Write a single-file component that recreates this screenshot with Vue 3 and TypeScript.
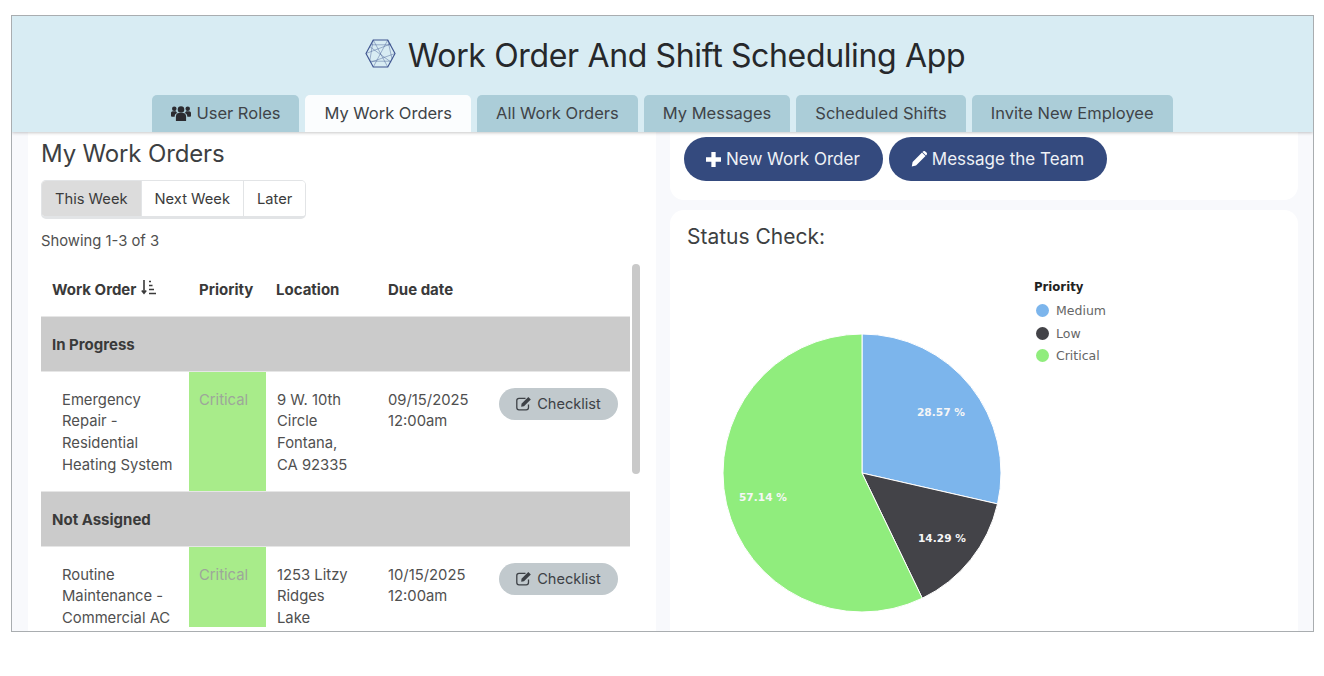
<script setup lang="ts">
import { computed } from 'vue'

const tabs = ['User Roles', 'My Work Orders', 'All Work Orders', 'My Messages', 'Scheduled Shifts', 'Invite New Employee']
const ranges = ['This Week', 'Next Week', 'Later']

const groups = [
  {
    name: 'In Progress',
    rows: [
      {
        title: ['Emergency', 'Repair -', 'Residential', 'Heating System'],
        location: ['9 W. 10th', 'Circle', 'Fontana,', 'CA 92335'],
        due: ['09/15/2025', '12:00am']
      }
    ]
  },
  {
    name: 'Not Assigned',
    rows: [
      {
        title: ['Routine', 'Maintenance -', 'Commercial AC'],
        location: ['1253 Litzy', 'Ridges', 'Lake'],
        due: ['10/15/2025', '12:00am']
      }
    ]
  }
]

const pieData = [
  { name: 'Medium', value: 28.57, color: '#7cb5ec' },
  { name: 'Low', value: 14.29, color: '#434348' },
  { name: 'Critical', value: 57.14, color: '#90ed7d' }
]

const slices = computed(() => {
  const r = 139
  let start = 0
  return pieData.map((d) => {
    const end = start + (d.value / 100) * Math.PI * 2
    const x1 = 140 + r * Math.sin(start)
    const y1 = 140 - r * Math.cos(start)
    const x2 = 140 + r * Math.sin(end)
    const y2 = 140 - r * Math.cos(end)
    const large = end - start > Math.PI ? 1 : 0
    start = end
    return { ...d, path: `M140 140L${x1} ${y1}A${r} ${r} 0 ${large} 1 ${x2} ${y2}Z` }
  })
})
</script>

<template>
  <div class="page">
    <div class="frame">
      <header class="top">
        <h1 class="app-title">
          <svg class="logo" viewBox="0 0 32 30" fill="none" stroke="#3f5590" stroke-width="0.8">
            <path stroke-width="1.2" d="M1 15L8.500 1H23.500L31 15L23.500 29H8.500Z" />
            <path d="M8.500 1L23.500 29M23.500 1L8.500 29M1 15L27 5M5 8L27 24M31 15L6 24M8.500 1L5 22M23.500 1L28 21M6 6H27M5 23H27" stroke-opacity=".55" />
          </svg>
          Work Order And Shift Scheduling App
        </h1>
        <nav class="tabs">
          <div v-for="(t, i) in tabs" :key="t" class="tab" :class="{ active: i === 1 }">
            <svg v-if="i === 0" class="users" viewBox="0 0 22 17" fill="#2b2b30">
              <circle cx="11" cy="4" r="3.600" />
              <circle cx="3.600" cy="3.200" r="2.500" />
              <circle cx="18.400" cy="3.200" r="2.500" />
              <path d="M5.400 16.800V12C5.400 9.200 7 8 8.600 8H13.400C15 8 16.600 9.200 16.600 12V16.800Z" />
              <path d="M0 11V8C0 6.800 1 6 2 6H5.500C5.800 6.900 6.300 7.500 7 8C5 8.600 4 10 4 12H1C.4 12 0 11.600 0 11ZM22 11V8C22 6.800 21 6 20 6H16.500C16.200 6.900 15.700 7.500 15 8C17 8.600 18 10 18 12H21C21.600 12 22 11.600 22 11Z" />
            </svg>
            {{ t }}
          </div>
        </nav>
      </header>

      <main class="content">
        <section class="left">
          <h2 class="section-title">My Work Orders</h2>
          <div class="range-group">
            <button v-for="(r, i) in ranges" :key="r" type="button" class="range" :class="{ on: i === 0 }">{{ r }}</button>
          </div>
          <div class="showing">Showing 1-3 of 3</div>
          <div class="table-wrap">
            <table class="orders">
              <thead>
                <tr>
                  <th class="c-order">
                    Work Order
                    <svg class="sort" viewBox="0 0 15 15" fill="none" stroke="#3a3a3a" stroke-width="1.600">
                      <path d="M3 0V13M.8 10.500L3 13.300L5.200 10.500" />
                      <path d="M8 1.500H10M8 5.500H11.500M8 9.500H13M8 13.500H15" />
                    </svg>
                  </th>
                  <th class="c-priority">Priority</th>
                  <th class="c-location">Location</th>
                  <th class="c-due">Due date</th>
                  <th></th>
                </tr>
              </thead>
              <tbody v-for="g in groups" :key="g.name">
                <tr class="group-row">
                  <td colspan="5">{{ g.name }}</td>
                </tr>
                <tr v-for="row in g.rows" :key="row.title[0]" class="order-row">
                  <td class="c-order title-cell"><div v-for="l in row.title" :key="l">{{ l }}</div></td>
                  <td class="c-priority critical">Critical</td>
                  <td class="c-location"><div v-for="l in row.location" :key="l">{{ l }}</div></td>
                  <td class="c-due"><div v-for="l in row.due" :key="l">{{ l }}</div></td>
                  <td class="c-action">
                    <button type="button" class="checklist">
                      <svg class="edit" viewBox="0 0 16 15" fill="none" stroke="#3d4146" stroke-width="1.300">
                        <path d="M12.500 8.500V11.500C12.500 12.900 11.600 13.800 10.200 13.800H3C1.700 13.800 .8 12.900 .8 11.500V4.500C.8 3.200 1.700 2.300 3 2.300H9.500" />
                        <path fill="#3d4146" stroke="none" d="M5.500 7.700L12.300 .9L14.800 3.400L8 10.200L5.200 10.800Z" />
                      </svg>
                      Checklist
                    </button>
                  </td>
                </tr>
              </tbody>
            </table>
            <div class="scroll-thumb"></div>
          </div>
        </section>

        <section class="right">
          <div class="card actions">
            <button type="button" class="pill">
              <svg class="btn-icon" viewBox="0 0 14 14" fill="#fff"><path d="M5 0H9V5H14V9H9V14H5V9H0V5H5Z" /></svg>
              New Work Order
            </button>
            <button type="button" class="pill">
              <svg class="btn-icon wide" viewBox="0 0 16 16" fill="#fff"><path d="M11 1.500L14.500 5L5 14.500L.8 15.500L1.600 11ZM12 .5C12.800 -.2 13.600 -.2 14.300 .4L15.500 1.600C16.200 2.400 16.200 3.200 15.500 4L15 4.500L11.500 1Z" /></svg>
              Message the Team
            </button>
          </div>
          <div class="card status">
            <h3 class="status-title">Status Check:</h3>
            <div class="chart">
              <div class="pie-wrap">
                <svg class="pie" viewBox="0 0 280 280" width="280" height="280">
                  <path v-for="s in slices" :key="s.name" :d="s.path" :fill="s.color" stroke="#fff" stroke-width="1" stroke-linejoin="round" />
                </svg>
                <span class="pct pct-medium">28.57 %</span>
                <span class="pct pct-low">14.29 %</span>
                <span class="pct pct-critical">57.14 %</span>
              </div>
              <div class="legend">
                <div class="legend-title">Priority</div>
                <div v-for="d in pieData" :key="d.name" class="legend-item">
                  <span class="dot" :style="{ background: d.color }"></span>{{ d.name }}
                </div>
              </div>
            </div>
          </div>
        </section>
      </main>
    </div>
  </div>
</template>

<style>
html, body { margin: 0; background: #fff; }
</style>

<style scoped>
.page {
  box-sizing: border-box;
  width: 1324px;
  height: 676px;
  padding: 15px 10px 0 11px;
  font-family: Inter, "Liberation Sans", sans-serif;
  color: #3b3b3b;
}
.frame {
  box-sizing: border-box;
  height: 617px;
  border: 1px solid #a9adb0;
  overflow: hidden;
  background: #f8f9fc;
  display: flex;
  flex-direction: column;
}

.top {
  flex: none;
  height: 116px;
  background: #d8ecf3;
  display: flex;
  flex-direction: column;
  align-items: center;
  box-shadow: 0 1px 3px rgba(0, 0, 0, 0.22);
  position: relative;
  z-index: 2;
}
.app-title {
  margin: 19px 0 0;
  padding-left: 5px;
  height: 60px;
  display: flex;
  align-items: flex-start;
  gap: 12px;
  font-size: 32px;
  font-weight: 400;
  line-height: 41px;
  letter-spacing: -0.35px;
  color: #26282b;
}
.logo { width: 31px; height: 29px; margin-top: 4px; }
.tabs { display: flex; gap: 6px; }
.tab {
  height: 37px;
  padding: 0 19px;
  background: #abcdd8;
  border-radius: 5px 5px 0 0;
  font-size: 16.5px;
  line-height: 37px;
  color: #3f4448;
  display: flex;
  align-items: center;
  gap: 5px;
}
.tab.active { background: #fbfdfe; }
.users { width: 20px; height: 17px; }

.content {
  flex: 1;
  min-height: 0;
  display: flex;
  gap: 14px;
  padding: 0 15px 0 16px;
}
.left {
  width: 628px;
  flex: none;
  box-sizing: border-box;
  background: #fff;
  padding: 0 13px;
  overflow: hidden;
}
.section-title {
  margin: 5px 0 0;
  font-size: 24px;
  font-weight: 400;
  line-height: 34px;
  letter-spacing: -0.15px;
  color: #3d3f42;
}
.range-group {
  display: inline-flex;
  margin-top: 9px;
  border: 1px solid #e2e4e6;
  border-bottom-width: 3px;
  border-radius: 5px;
  overflow: hidden;
  vertical-align: top;
}
.range {
  height: 35px;
  padding: 0 13px;
  border: 0;
  border-left: 1px solid #e2e4e6;
  background: #fff;
  font: 400 14.7px Inter, "Liberation Sans", sans-serif;
  color: #3b3b3b;
}
.range:first-child { border-left: 0; }
.range.on { background: #dcdcdc; }
.showing { margin-top: 12px; font-size: 14.8px; line-height: 20px; color: #505050; }

.table-wrap {
  position: relative;
  margin-top: 13px;
  height: 363px;
  overflow: hidden;
}
.orders {
  width: 589px;
  border-collapse: collapse;
  table-layout: fixed;
  font-size: 14.8px;
  line-height: 21.75px;
}
.orders th {
  height: 52px;
  padding: 1px 0 0 11px;
  text-align: left;
  font-size: 15px;
  font-weight: 700;
  color: #3a3a3a;
  box-sizing: border-box;
}
.orders th:first-child { width: 148px; }
.orders th:nth-child(2) { width: 77px; padding-left: 10px; }
.orders th:nth-child(3) { width: 111px; padding-left: 10px; }
.orders th:nth-child(4) { width: 111px; }
.sort { width: 15px; height: 15px; margin-left: 1px; vertical-align: 0; }
.group-row td {
  height: 55px;
  padding: 3px 0 0 11px;
  background: #cbcbcb;
  border-top: 1px solid #e6e6e6;
  border-bottom: 1px solid #e6e6e6;
  font-size: 15px;
  font-weight: 700;
  color: #3a3a3a;
  box-sizing: border-box;
}
.order-row td {
  padding: 18px 0 14px 11px;
  vertical-align: top;
  color: #505050;
}
.order-row .title-cell { padding-left: 21px; }
.order-row .critical {
  padding-left: 10px;
  background: #a8ec8a;
  color: #9da69a;
}
.order-row .c-action { padding: 16px 0 0 11px; }
.checklist {
  display: inline-flex;
  align-items: center;
  gap: 5px;
  height: 32px;
  width: 119px;
  justify-content: center;
  border: 0;
  border-radius: 16px;
  background: #c1c9cd;
  font: 400 14.6px Inter, "Liberation Sans", sans-serif;
  color: #3d4146;
}
.edit { width: 16px; height: 15px; }
.scroll-thumb {
  position: absolute;
  left: 591px;
  top: 0;
  width: 8px;
  height: 210px;
  border-radius: 4px;
  background: #c9c9c9;
}

.right {
  flex: 1;
  min-width: 0;
  display: flex;
  flex-direction: column;
  gap: 10px;
}
.card { background: #fff; border-radius: 14px; }
.actions {
  flex: none;
  height: 68px;
  padding: 5px 14px 0;
  display: flex;
  gap: 6px;
  box-sizing: border-box;
  border-radius: 0 0 14px 14px;
}
.pill {
  display: inline-flex;
  align-items: center;
  gap: 5px;
  height: 44px;
  padding: 0 23px 0 22px;
  border: 0;
  border-radius: 22px;
  background: #344a7e;
  color: #eef1f6;
  font: 400 17px Inter, "Liberation Sans", sans-serif;
}
.btn-icon { width: 15px; height: 15px; }
.btn-icon.wide { width: 16px; height: 16px; }
.status {
  flex: 1;
  min-height: 0;
  padding: 15px 17px 0;
  overflow: hidden;
  border-radius: 14px 14px 0 0;
}
.status-title {
  margin: 0;
  font-size: 21px;
  font-weight: 400;
  line-height: 24px;
  color: #3d3f42;
}
.chart {
  display: flex;
  align-items: flex-start;
  margin: 9px 0 0 35px;
}
.pie-wrap {
  position: relative;
  width: 280px;
  height: 280px;
  margin-top: 75px;
  flex: none;
}
.pie { display: block; }
.pct {
  position: absolute;
  font: 700 10.6px "DejaVu Sans", "Liberation Sans", sans-serif;
  color: #f6f6f6;
  line-height: 14px;
  white-space: nowrap;
}
.pct-medium { left: 195px; top: 72px; }
.pct-low { left: 196px; top: 198px; }
.pct-critical { left: 17px; top: 157px; }
.legend { margin: 19px 0 0 32px; font: 12.5px "DejaVu Sans", "Liberation Sans", sans-serif; color: #666; }
.legend-title { font-size: 11.7px; font-weight: 700; color: #222; line-height: 20px; margin-bottom: 2px; }
.legend-item { display: flex; align-items: center; gap: 7px; height: 22.7px; margin-left: 2px; }
.dot { width: 13px; height: 13px; border-radius: 50%; }
</style>
